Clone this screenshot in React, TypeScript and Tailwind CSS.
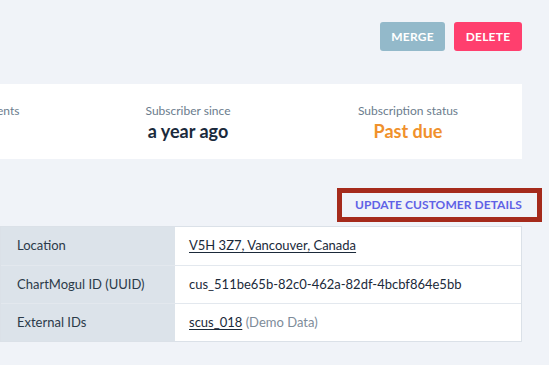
import React from 'react';

const rows = [
  { label: 'Location', value: <a className="underline underline-offset-2 text-[#1b2a3a]">V5H 3Z7, Vancouver, Canada</a> },
  { label: 'ChartMogul ID (UUID)', value: <span className="text-[#1b2a3a]">cus_511be65b-82c0-462a-82df-4bcbf864e5bb</span> },
  {
    label: 'External IDs',
    value: (
      <span>
        <a className="underline underline-offset-2 text-[#1b2a3a]">scus_018</a>
        <span className="text-[#7d8b99]"> (Demo Data)</span>
      </span>
    ),
  },
];

export default function App() {
  return (
    <div
      className="w-[549px] h-[365px] overflow-hidden bg-[#f0f3f8]"
      style={{ fontFamily: 'Lato, "Noto Sans", sans-serif' }}
    >
      <div className="w-[522px] pt-[22px]">
        {/* Actions */}
        <div className="flex justify-end gap-[9px]">
          <button className="h-[29px] w-[65px] rounded-[3px] bg-[#93b9ca] text-[12px] font-bold text-white tracking-[0.02em]">
            MERGE
          </button>
          <button className="h-[29px] w-[68px] rounded-[3px] bg-[#ff3f6e] text-[12px] font-bold text-white tracking-[0.02em]">
            DELETE
          </button>
        </div>

        {/* Stats card */}
        <div className="mt-[33px] h-[75px] bg-white flex justify-end pr-[4px] pt-[19px]">
          {[
            { label: 'Successful payments', value: '', cls: 'text-[#1a2a3b]', pad: 'pr-[6px]' },
            { label: 'Subscriber since', value: 'a year ago', cls: 'text-[#1a2a3b]', pad: '' },
            { label: 'Subscription status', value: 'Past due', cls: 'text-[#f0912c]', pad: '' },
          ].map((s) => (
            <div key={s.label} className={`w-[220px] shrink-0 text-center ${s.pad}`}>
              <div className="text-[12px] leading-[15px] text-[#6b7c8d]">{s.label}</div>
              <div className={`text-[18px] leading-[26px] font-bold ${s.cls}`}>{s.value}</div>
            </div>
          ))}
        </div>

        {/* Update details */}
        <div className="mt-[29px] flex justify-end">
          <button className="-mr-[20px] h-[34px] border-[5px] border-[#a52a1b] pl-[13px] pr-[15px] text-[12px] font-bold tracking-[0.005em] text-[#5f62e6]">
            UPDATE CUSTOMER DETAILS
          </button>
        </div>

        {/* Details table */}
        <div className="mt-[4px] border border-[#dbe1e8] bg-white text-[13px]">
          {rows.map((r, i) => (
            <div key={r.label} className={`flex h-[38px] ${i > 0 ? 'border-t border-[#e3e8ee]' : ''}`}>
              <div className="w-[174px] shrink-0 bg-[#dce3ea] flex items-center pl-[16px] text-[#2b3a49]">
                {r.label}
              </div>
              <div className="flex items-center pl-[14px]">{r.value}</div>
            </div>
          ))}
        </div>
      </div>
    </div>
  );
}
